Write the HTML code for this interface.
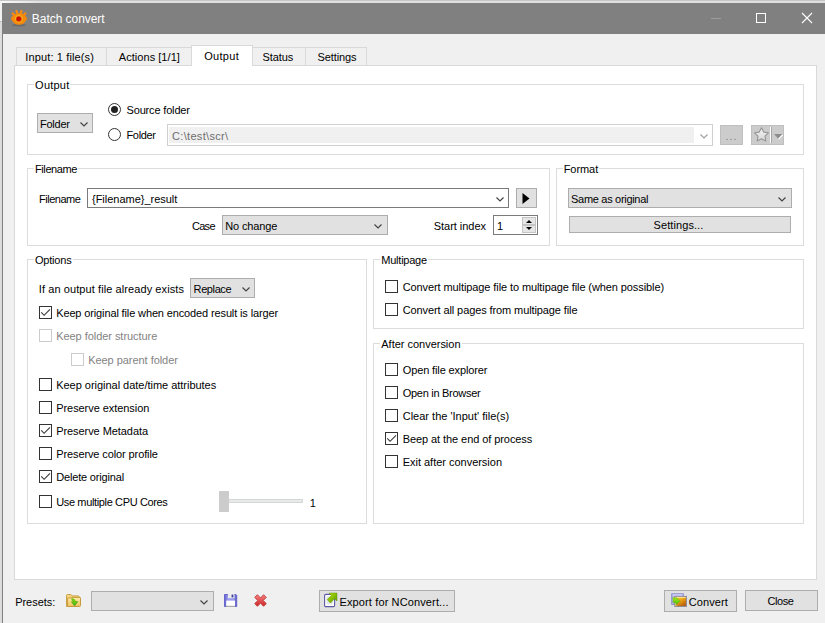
<!DOCTYPE html>
<html><head><meta charset="utf-8"><title>Batch convert</title>
<style>
html,body{margin:0;padding:0;}
body{width:825px;height:623px;overflow:hidden;background:#f0f0f0;position:relative;font-family:"Liberation Sans",sans-serif;font-size:11px;color:#000;}
.a{position:absolute;box-sizing:border-box;}
.t{position:absolute;white-space:nowrap;line-height:13px;height:13px;}
.gb{position:absolute;box-sizing:border-box;border:1px solid #dcdcdc;}
.lg{background:#fff;padding:0 1px;margin-left:-1.5px;}
.cb{position:absolute;box-sizing:border-box;width:13px;height:13px;border:1px solid #333;background:#fff;}
.cb.dis{border-color:#ccc;}
.cb svg{position:absolute;left:0;top:0;}
.combo{position:absolute;box-sizing:border-box;background:#e1e1e1;border:1px solid #adadad;}
.btn{position:absolute;box-sizing:border-box;background:#e1e1e1;border:1px solid #adadad;}
.dis{color:#838383;}
.tab{position:absolute;box-sizing:border-box;top:47px;height:18px;border:1px solid #d9d9d9;border-bottom:none;background:#f0f0f0;}
</style></head><body>
<!-- outer strips -->
<div class="a" style="left:0;top:0;width:825px;height:3px;background:linear-gradient(to right,#fafafa 0,#e0e0e0 40px);"></div>
<div class="a" style="left:0;top:0;width:825px;height:1px;background:#c6c6c6;"></div>
<div class="a" style="left:0;top:1px;width:2px;height:21px;background:#f2f2f2;"></div>
<div class="a" style="left:0;top:21px;width:2px;height:602px;background:#dcdcdc;"></div>
<div class="a" style="left:0;top:21px;width:2px;height:1px;background:#c0c0c0;"></div>
<div class="a" style="left:2px;top:3px;width:1px;height:620px;background:#808080;"></div>
<!-- title bar -->
<div class="a" style="left:2px;top:3px;width:823px;height:31px;background:#808080;"></div>
<svg class="a" style="left:10px;top:9px;" width="18" height="18" viewBox="0 0 18 18">
 <defs><radialGradient id="ey" cx="0.5" cy="0.5" r="0.5"><stop offset="0.55" stop-color="#f6b21c"/><stop offset="0.8" stop-color="#f39a10"/><stop offset="1" stop-color="#ee7e08"/></radialGradient></defs>
 <ellipse cx="9" cy="16.1" rx="7.4" ry="1.3" fill="#000" fill-opacity="0.16"/>
 <g stroke="#f98a10" stroke-width="2.3" stroke-linecap="round" fill="none">
  <path d="M4.6 6.8 L2.7 4.4"/><path d="M7.4 5.2 L6.5 2"/><path d="M10.6 5.2 L11.5 2"/><path d="M13.4 6.8 L15.3 4.4"/>
 </g>
 <path d="M0.8 9.4 Q3.6 4.2 9 4.2 Q14.4 4.2 17.2 9.4 Q14.6 15.7 9 15.7 Q3.4 15.7 0.8 9.4 Z" fill="#f8880c"/>
 <circle cx="8.8" cy="9.8" r="5.2" fill="url(#ey)"/>
 <circle cx="8.8" cy="9.9" r="2.7" fill="#d21a04"/>
 <circle cx="8.4" cy="9.6" r="1.3" fill="#c40c00"/>
</svg>
<div class="t" style="left:31.8px;top:12px;letter-spacing:-0.044px;font-size:12px;line-height:15px;height:15px;color:#fff;">Batch convert</div>
<div class="a" style="left:711px;top:18px;width:10px;height:1px;background:#9c9c9c;"></div>
<div class="a" style="left:756px;top:13px;width:10px;height:10px;border:1px solid #fff;"></div>
<svg class="a" style="left:801px;top:12px;" width="12" height="12" viewBox="0 0 12 12"><path d="M1 1 L11 11 M11 1 L1 11" stroke="#fff" stroke-width="1.1" fill="none"/></svg>

<!-- tab pane -->
<div class="a" style="left:14px;top:65px;width:803px;height:515px;background:#fff;border:1px solid #d9d9d9;"></div>
<!-- tabs -->
<div class="tab" style="left:16px;width:91px;"></div>
<div class="tab" style="left:106px;width:86px;"></div>
<div class="tab" style="left:252px;width:54px;border-left:none;"></div>
<div class="tab" style="left:305px;width:62px;"></div>
<div class="tab" style="left:191px;width:62px;top:45px;height:21px;background:#fff;"></div>
<div class="t" style="left:25.3px;top:51px;letter-spacing:0.129px;">Input: 1 file(s)</div>
<div class="t" style="left:118.8px;top:51px;letter-spacing:0.043px;">Actions [1/1]</div>
<div class="t" style="left:204.2px;top:50px;letter-spacing:0.295px;">Output</div>
<div class="t" style="left:262.4px;top:51px;letter-spacing:-0.065px;">Status</div>
<div class="t" style="left:317.5px;top:51px;letter-spacing:-0.094px;">Settings</div>
<!-- Output group -->
<div class="gb" style="left:27px;top:84px;width:777px;height:71px;"></div>
<div class="t lg" style="left:35.6px;top:79px;letter-spacing:0.228px;">Output</div>
<div class="combo" style="left:37px;top:113px;width:56px;height:20px;"></div>
<div class="t" style="left:40px;top:118px;letter-spacing:-0.231px;">Folder</div>
<svg class="a" style="left:79.5px;top:121.5px;" width="8" height="5" viewBox="0 0 8 5"><path d="M0.5 0.5 L4 4 L7.5 0.5" stroke="#444" fill="none" stroke-width="1.2"/></svg>
<div class="a" style="left:108px;top:103px;width:13px;height:13px;border:1px solid #333;border-radius:50%;background:#fff;"></div>
<div class="a" style="left:111px;top:106px;width:7px;height:7px;border-radius:50%;background:#222;"></div>
<div class="t" style="left:126.5px;top:104px;letter-spacing:-0.164px;">Source folder</div>
<div class="a" style="left:108px;top:128px;width:13px;height:13px;border:1px solid #333;border-radius:50%;background:#fff;"></div>
<div class="t" style="left:126.5px;top:129px;letter-spacing:-0.348px;">Folder</div>
<div class="a" style="left:167px;top:124px;width:546px;height:22px;border:1px solid #d0d0d0;background:#fff;"></div>
<div class="a" style="left:169px;top:127px;width:525px;height:16px;background:#f0f0f0;"></div>
<div class="t" style="left:172px;top:130px;letter-spacing:0.328px;color:#6d6d6d;">C:\test\scr\</div>
<svg class="a" style="left:700px;top:134px;" width="8" height="5" viewBox="0 0 8 5"><path d="M0.5 0.5 L4 4 L7.5 0.5" stroke="#a0a0a0" fill="none" stroke-width="1.2"/></svg>
<div class="a" style="left:720px;top:125px;width:23px;height:20px;background:#cccccc;border:1px solid #bfbfbf;"></div>
<div class="t" style="left:725.5px;top:130px;letter-spacing:0.943px;color:#838383;">...</div>
<div class="a" style="left:751px;top:125px;width:33px;height:20px;background:#cccccc;border:1px solid #bfbfbf;"></div>
<svg class="a" style="left:753px;top:126px;" width="17" height="17" viewBox="0 0 17 17"><defs><linearGradient id="st" x1="0" y1="0" x2="0" y2="1"><stop offset="0" stop-color="#f6f6f6"/><stop offset="1" stop-color="#d6d6d6"/></linearGradient></defs><path d="M8.5 1.8 L10.7 6.1 L15.4 6.8 L12.0 10.2 L12.8 15.0 L8.5 12.8 L4.2 15.0 L5.0 10.2 L1.6 6.8 L6.3 6.1 Z" fill="url(#st)" stroke="#959595" stroke-width="1.1" stroke-linejoin="round"/></svg>
<div class="a" style="left:770px;top:127px;width:1px;height:16px;background:#fff;"></div>
<div class="a" style="left:771px;top:127px;width:1px;height:16px;background:#a6a6a6;"></div>
<svg class="a" style="left:774px;top:134px;" width="10" height="6" viewBox="0 0 10 6"><path d="M8.6 0.8 L4.6 5.2" stroke="#fff" stroke-width="1.2" fill="none"/><path d="M0 0 L8.2 0 L4.1 4.6 Z" fill="#8c8c8c"/></svg>

<!-- Filename group -->
<div class="gb" style="left:27px;top:168px;width:523px;height:78px;"></div>
<div class="t lg" style="left:35.5px;top:163px;letter-spacing:-0.406px;">Filename</div>
<div class="t" style="left:38.9px;top:193px;letter-spacing:-0.456px;">Filename</div>
<div class="a" style="left:87px;top:188px;width:422px;height:20px;background:#fff;border:1px solid #7a7a7a;"></div>
<div class="t" style="left:92px;top:193px;letter-spacing:-0.018px;">{Filename}_result</div>
<svg class="a" style="left:496px;top:196.5px;" width="8" height="5" viewBox="0 0 8 5"><path d="M0.5 0.5 L4 4 L7.5 0.5" stroke="#444" fill="none" stroke-width="1.2"/></svg>
<div class="btn" style="left:516px;top:188px;width:21px;height:20px;"></div>
<svg class="a" style="left:522px;top:193px;" width="8" height="11" viewBox="0 0 8 11"><path d="M0.5 0 L7.5 5.5 L0.5 11 Z" fill="#000"/></svg>
<div class="t" style="left:192px;top:220px;letter-spacing:-0.722px;">Case</div>
<div class="combo" style="left:222px;top:215px;width:166px;height:20px;"></div>
<div class="t" style="left:225.3px;top:220px;letter-spacing:-0.135px;">No change</div>
<svg class="a" style="left:374px;top:223.5px;" width="8" height="5" viewBox="0 0 8 5"><path d="M0.5 0.5 L4 4 L7.5 0.5" stroke="#444" fill="none" stroke-width="1.2"/></svg>
<div class="t" style="left:433.8px;top:220px;letter-spacing:-0.036px;">Start index</div>
<div class="a" style="left:493px;top:215px;width:45px;height:20px;background:#fff;border:1px solid #7a7a7a;"></div>
<div class="t" style="left:497px;top:220px;">1</div>
<div class="a" style="left:522px;top:217px;width:14px;height:8px;background:#e6e6e6;border:1px solid #c4c4c4;"></div>
<div class="a" style="left:522px;top:225px;width:14px;height:8px;background:#e6e6e6;border:1px solid #c4c4c4;"></div>
<svg class="a" style="left:526px;top:220px;" width="6" height="3" viewBox="0 0 6 3"><path d="M0 3 L3 0 L6 3 Z" fill="#000"/></svg>
<svg class="a" style="left:526px;top:227px;" width="6" height="3" viewBox="0 0 6 3"><path d="M0 0 L3 3 L6 0 Z" fill="#000"/></svg>

<!-- Format group -->
<div class="gb" style="left:556px;top:168px;width:248px;height:78px;"></div>
<div class="t lg" style="left:564.2px;top:163px;letter-spacing:-0.057px;">Format</div>
<div class="combo" style="left:568px;top:188px;width:224px;height:20px;"></div>
<div class="t" style="left:571.1px;top:193px;letter-spacing:-0.309px;">Same as original</div>
<svg class="a" style="left:778px;top:196.5px;" width="8" height="5" viewBox="0 0 8 5"><path d="M0.5 0.5 L4 4 L7.5 0.5" stroke="#444" fill="none" stroke-width="1.2"/></svg>
<div class="btn" style="left:569px;top:216px;width:222px;height:17px;"></div>
<div class="t" style="left:653.6px;top:219px;letter-spacing:0.080px;">Settings...</div>
<!-- Options group -->
<div class="gb" style="left:27px;top:259px;width:340px;height:265px;"></div>
<div class="t lg" style="left:35.5px;top:254px;letter-spacing:-0.203px;">Options</div>
<div class="t" style="left:38.8px;top:283px;letter-spacing:0.085px;">If an output file already exists</div>
<div class="combo" style="left:190px;top:278px;width:65px;height:20px;"></div>
<div class="t" style="left:193.6px;top:283px;letter-spacing:-0.394px;">Replace</div>
<svg class="a" style="left:241.5px;top:286.5px;" width="8" height="5" viewBox="0 0 8 5"><path d="M0.5 0.5 L4 4 L7.5 0.5" stroke="#444" fill="none" stroke-width="1.2"/></svg>
<div class="cb" style="left:39px;top:306px;"><svg width="11" height="11" viewBox="0 0 11 11"><path d="M1.2 5.4 L4.1 8.3 L10 2.3" stroke="#3a3a3a" fill="none" stroke-width="1.15"/></svg></div>
<div class="t" style="left:56.2px;top:307px;letter-spacing:-0.131px;">Keep original file when encoded result is larger</div>
<div class="cb dis" style="left:39px;top:329px;"></div>
<div class="t dis" style="left:56.2px;top:330px;letter-spacing:-0.049px;">Keep folder structure</div>
<div class="cb dis" style="left:71px;top:353px;"></div>
<div class="t dis" style="left:88.2px;top:354px;letter-spacing:-0.045px;">Keep parent folder</div>
<div class="cb" style="left:39px;top:378px;"></div>
<div class="t" style="left:56.2px;top:379px;letter-spacing:-0.024px;">Keep original date/time attributes</div>
<div class="cb" style="left:39px;top:401px;"></div>
<div class="t" style="left:56.2px;top:402px;letter-spacing:-0.060px;">Preserve extension</div>
<div class="cb" style="left:39px;top:424px;"><svg width="11" height="11" viewBox="0 0 11 11"><path d="M1.2 5.4 L4.1 8.3 L10 2.3" stroke="#3a3a3a" fill="none" stroke-width="1.15"/></svg></div>
<div class="t" style="left:56.2px;top:425px;letter-spacing:-0.067px;">Preserve Metadata</div>
<div class="cb" style="left:39px;top:447px;"></div>
<div class="t" style="left:56.2px;top:448px;letter-spacing:-0.106px;">Preserve color profile</div>
<div class="cb" style="left:39px;top:470px;"><svg width="11" height="11" viewBox="0 0 11 11"><path d="M1.2 5.4 L4.1 8.3 L10 2.3" stroke="#3a3a3a" fill="none" stroke-width="1.15"/></svg></div>
<div class="t" style="left:56.2px;top:471px;letter-spacing:-0.169px;">Delete original</div>
<div class="cb" style="left:39px;top:495px;"></div>
<div class="t" style="left:56.2px;top:496px;letter-spacing:-0.359px;">Use multiple CPU Cores</div>
<div class="a" style="left:224px;top:499px;width:79px;height:4px;background:#e7eaea;border:1px solid #d6d6d6;"></div>
<div class="a" style="left:219px;top:491px;width:10px;height:21px;background:#cccccc;"></div>
<div class="t" style="left:309.7px;top:497px;">1</div>
<!-- Multipage group -->
<div class="gb" style="left:373px;top:259px;width:431px;height:70px;"></div>
<div class="t lg" style="left:381.8px;top:254px;letter-spacing:-0.234px;">Multipage</div>
<div class="cb" style="left:385px;top:280px;"></div>
<div class="t" style="left:402.7px;top:281px;letter-spacing:-0.094px;">Convert multipage file to multipage file (when possible)</div>
<div class="cb" style="left:385px;top:303px;"></div>
<div class="t" style="left:402.7px;top:304px;letter-spacing:-0.101px;">Convert all pages from multipage file</div>
<!-- After conversion group -->
<div class="gb" style="left:373px;top:343px;width:431px;height:181px;"></div>
<div class="t lg" style="left:381.8px;top:338px;letter-spacing:-0.018px;">After conversion</div>
<div class="cb" style="left:385px;top:363px;"></div>
<div class="t" style="left:402.7px;top:364px;letter-spacing:-0.118px;">Open file explorer</div>
<div class="cb" style="left:385px;top:386px;"></div>
<div class="t" style="left:402.7px;top:387px;letter-spacing:-0.283px;">Open in Browser</div>
<div class="cb" style="left:385px;top:409px;"></div>
<div class="t" style="left:402.7px;top:410px;letter-spacing:0.007px;">Clear the 'Input' file(s)</div>
<div class="cb" style="left:385px;top:432px;"><svg width="11" height="11" viewBox="0 0 11 11"><path d="M1.2 5.4 L4.1 8.3 L10 2.3" stroke="#3a3a3a" fill="none" stroke-width="1.15"/></svg></div>
<div class="t" style="left:402.7px;top:433px;letter-spacing:-0.076px;">Beep at the end of process</div>
<div class="cb" style="left:385px;top:455px;"></div>
<div class="t" style="left:402.7px;top:456px;letter-spacing:-0.017px;">Exit after conversion</div>
<!-- Bottom bar -->
<div class="t" style="left:15.2px;top:596px;letter-spacing:-0.045px;">Presets:</div>
<svg class="a" style="left:65px;top:593px;" width="17" height="15" viewBox="0 0 17 15">
 <defs><linearGradient id="fg" x1="0" y1="0" x2="0" y2="1"><stop offset="0" stop-color="#fff0a8"/><stop offset="1" stop-color="#f3c15c"/></linearGradient>
 <linearGradient id="ga" x1="0" y1="0" x2="0" y2="1"><stop offset="0" stop-color="#8fe800"/><stop offset="1" stop-color="#3fae1c"/></linearGradient></defs>
 <path d="M1.5 13.5 L1.5 2.5 Q1.5 1.5 2.5 1.5 L5.8 1.5 L7 2.9 L13.2 2.9 Q14.2 2.9 14.2 3.9 L14.2 13.5 Z" fill="#f5d57a" stroke="#c9a04a" stroke-width="1"/>
 <path d="M2.6 13.5 L2.6 5.6 Q2.6 5 3.2 5 L6 5 L6.8 4.4 L14.8 4.4 Q15.5 4.4 15.5 5.1 L15.5 12.6 Q15.5 13.5 14.6 13.5 Z" fill="url(#fg)" stroke="#c79a3e" stroke-width="1"/>
 <path d="M6.8 5.6 Q10 5.6 10.4 8.6 L12.9 8.6 L9.6 13 L6.3 8.8 L8.4 8.8 Q8.3 7.3 6.8 7.2 Z" fill="url(#ga)" stroke="#3c9a12" stroke-width="0.5"/>
</svg>
<div class="combo" style="left:91px;top:591px;width:123px;height:20px;"></div>
<svg class="a" style="left:200px;top:599.5px;" width="8" height="5" viewBox="0 0 8 5"><path d="M0.5 0.5 L4 4 L7.5 0.5" stroke="#444" fill="none" stroke-width="1.2"/></svg>
<svg class="a" style="left:224px;top:594px;" width="14" height="13" viewBox="0 0 14 13">
 <defs><linearGradient id="sg" x1="0" y1="0" x2="1" y2="0"><stop offset="0" stop-color="#5a5ac8"/><stop offset="0.25" stop-color="#9c9cec"/><stop offset="0.75" stop-color="#9c9cec"/><stop offset="1" stop-color="#5252c0"/></linearGradient></defs>
 <path d="M0.5 0.5 L12 0.5 L12.7 1.2 L12.7 12.5 L0.5 12.5 Z" fill="url(#sg)" stroke="#6060c8" stroke-width="0.9"/>
 <rect x="4" y="0" width="6.4" height="4.2" fill="#ececec"/>
 <rect x="7.6" y="0.6" width="1.7" height="2.8" fill="#3c3c9c"/>
 <rect x="2.2" y="6.6" width="8.8" height="5.4" fill="#fff"/>
 <rect x="2.2" y="11.8" width="8.8" height="1.2" fill="#a8a8a8"/>
</svg>
<svg class="a" style="left:254px;top:594px;" width="13" height="13" viewBox="0 0 13 13">
 <defs><linearGradient id="rx" x1="0" y1="0" x2="0" y2="1"><stop offset="0" stop-color="#f58282"/><stop offset="1" stop-color="#cc2424"/></linearGradient></defs>
 <path d="M0.7 3.4 L3.4 0.7 L6.5 3.8 L9.6 0.7 L12.3 3.4 L9.2 6.5 L12.3 9.6 L9.6 12.3 L6.5 9.2 L3.4 12.3 L0.7 9.6 L3.8 6.5 Z" fill="url(#rx)" stroke="#c04040" stroke-width="0.9" stroke-linejoin="round"/>
</svg>

<div class="btn" style="left:319px;top:590px;width:136px;height:22px;"></div>
<svg class="a" style="left:324px;top:592px;" width="14" height="16" viewBox="0 0 14 16">
 <defs><linearGradient id="eg" x1="0" y1="0" x2="1" y2="1"><stop offset="0" stop-color="#b4e400"/><stop offset="1" stop-color="#5c9a00"/></linearGradient></defs>
 <rect x="0.6" y="2.4" width="10" height="12.2" rx="1.2" fill="#fff" stroke="#5a5aa6" stroke-width="1.1"/>
 <rect x="2.4" y="4.4" width="6.4" height="8" fill="#e4e7ea"/>
 <path d="M5 1 L13 1 L13 9 L10.6 6.8 L6.4 11 L3.2 7.6 L7.4 3.4 Z" fill="url(#eg)" stroke="#5c9400" stroke-width="0.5"/>
</svg>
<div class="t" style="left:339.5px;top:596px;letter-spacing:0.124px;">Export for NConvert...</div>
<div class="btn" style="left:664px;top:590px;width:73px;height:22px;"></div>
<svg class="a" style="left:671px;top:593px;" width="16" height="14" viewBox="0 0 16 14">
 <defs><linearGradient id="og" x1="0" y1="0" x2="0.7" y2="1"><stop offset="0" stop-color="#ffe640"/><stop offset="0.45" stop-color="#f2a818"/><stop offset="1" stop-color="#b85c08"/></linearGradient>
 <linearGradient id="cg" x1="0" y1="0" x2="0" y2="1"><stop offset="0" stop-color="#a6ee10"/><stop offset="1" stop-color="#4fb41a"/></linearGradient></defs>
 <rect x="0.7" y="0.8" width="11.6" height="10.6" fill="#b6b6f0" stroke="#8c8cca" stroke-width="1"/>
 <path d="M1.7 2 L11.3 2" stroke="#dcdcfa" stroke-width="1"/>
 <rect x="3.8" y="3.4" width="11.6" height="10" fill="url(#og)" stroke="#88889a" stroke-width="1"/>
 <path d="M4.8 12.8 L4.8 4.4 L14.6 4.4" stroke="#fff4c0" stroke-width="0.8" fill="none"/>
 <path d="M1.4 4.6 Q3.6 4.2 5 6 L5 4.4 L9.4 8 L5 11.8 L5 10 Q3 10.4 1.4 9 Q3 8.4 1.4 4.6 Z" fill="url(#cg)" stroke="#56b012" stroke-width="0.4"/>
</svg>
<div class="t" style="left:688.7px;top:596px;letter-spacing:0.110px;">Convert</div>
<div class="btn" style="left:745px;top:590px;width:73px;height:21px;"></div>
<div class="t" style="left:767.4px;top:595px;letter-spacing:-0.385px;">Close</div>
</body></html>
